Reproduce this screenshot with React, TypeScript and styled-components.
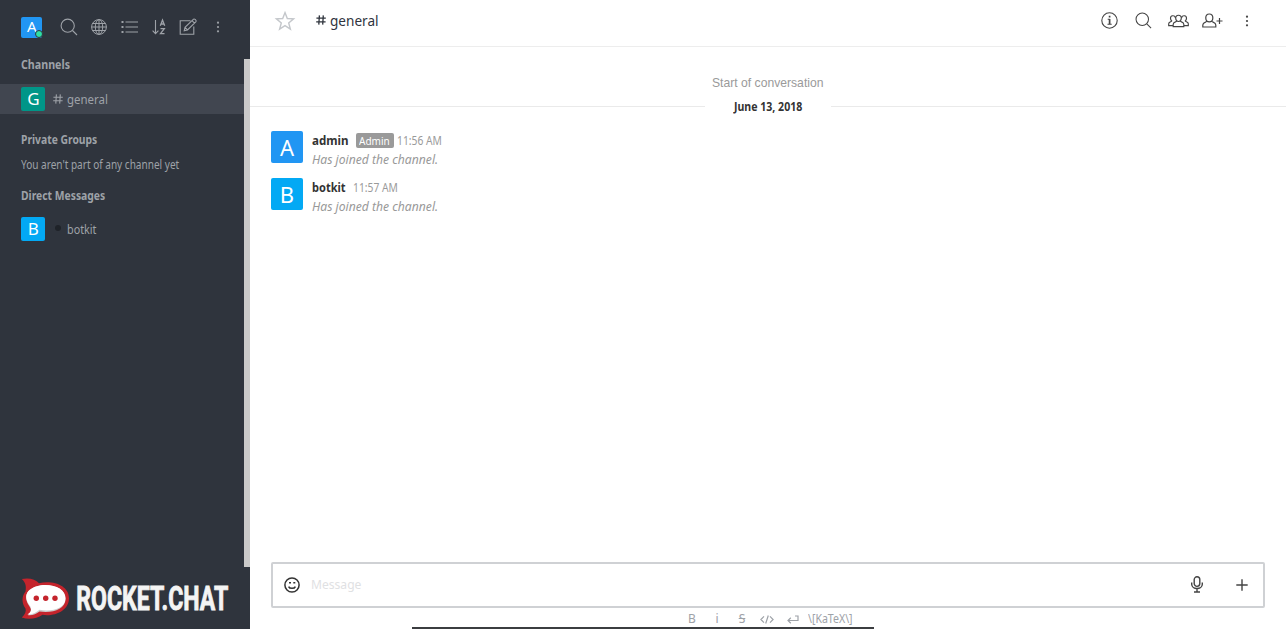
import React from 'react';
import styled, { createGlobalStyle } from 'styled-components';

const Global = createGlobalStyle`
  * { box-sizing: border-box; }
  body { margin: 0; overflow: hidden; font-family: "Noto Sans", "Open Sans", sans-serif; }
  svg { display: block; flex: none; fill: none; stroke: currentColor; overflow: visible; }
`;

const Page = styled.div`display: flex; width: 1286px; height: 629px; overflow: hidden; background: #fff;`;

const Sidebar = styled.aside`
  width: 250px; height: 629px; flex: none; display: flex; flex-direction: column;
  background: #2f343d; color: #9ea2a8;
`;
const SideTools = styled.div`height: 59px; flex: none; padding: 16.5px 0 0 21.4px; display: flex; align-items: flex-start;`;
const ToolSlot = styled.div<{ $w: number }>`width: ${p => p.$w}px; height: 21px; flex: none; display: flex; align-items: center; justify-content: center;`;
const SideScroll = styled.div`height: 508px; flex: none; display: flex;`;
const SideList = styled.div`flex: 1;`;
const ScrollThumb = styled.div`width: 6px; background: #cac9c9;`;
const Text = styled.span<{ $size: number; $w: number; $sx?: number; $color?: string; $bold?: boolean; $italic?: boolean }>`
  display: block; flex: none; width: ${p => p.$w}px; white-space: nowrap;
  font-size: ${p => p.$size}px; font-weight: ${p => (p.$bold ? 700 : 400)};
  font-style: ${p => (p.$italic ? 'italic' : 'normal')};
  transform: scaleX(${p => p.$sx ?? 1}); transform-origin: 0 50%;
  color: ${p => p.$color ?? 'inherit'};
`;
const StartText = styled(Text)`font-family: "Liberation Sans", sans-serif;`;
const SideHeading = styled.div<{ $h: number; $top?: number }>`
  height: ${p => p.$h}px; margin-top: ${p => p.$top ?? 0}px; padding-left: 21.4px; line-height: 12px;
`;
const SideRow = styled.div<{ $active?: boolean }>`
  height: 30px; display: flex; align-items: center; padding-left: 21.4px;
  background: ${p => (p.$active ? '#414650' : 'transparent')};
`;
const Avatar = styled.div<{ $size: number; $bg: string; $font: number }>`
  position: relative; flex: none; width: ${p => p.$size}px; height: ${p => p.$size}px; border-radius: 2px;
  background: ${p => p.$bg}; color: #fff; font-size: ${p => p.$font}px;
  display: flex; align-items: center; justify-content: center; line-height: 1; padding-bottom: 1px;
`;
const Online = styled.i`
  position: absolute; right: -1px; bottom: 0; width: 8px; height: 8px; border-radius: 50%;
  background: #2de0a5; border: 1px solid #2f343d;
`;
const RowMark = styled.div`width: 22px; padding-left: 8px; display: flex; align-items: center;`;
const Offline = styled.i`width: 6px; height: 6px; margin: -2px 0 0 2px; border-radius: 50%; background: #1f2329;`;
const LogoBox = styled.div`height: 62px; padding: 10px 0 0 21px;`;

const Main = styled.main`flex: 1; display: flex; flex-direction: column; min-width: 0;`;
const Header = styled.header`
  height: 47px; flex: none; display: flex; align-items: center; padding: 0 22px 5px 25px;
  border-bottom: 1px solid #ededed; color: #2f343d;
`;
const RoomTitle = styled.div`display: flex; align-items: center; gap: 4px; padding: 0 0 2px 21px;`;
const Actions = styled.div`margin-left: auto; display: flex; color: #444;`;
const Messages = styled.section`flex: 1; padding-top: 27px;`;
const Start = styled.div`display: flex; justify-content: center; height: 18px; line-height: 18px; padding-right: 1px;`;
const DateLine = styled.div`
  display: flex; align-items: center; height: 28px; line-height: 28px;
  &::before, &::after { content: ''; height: 1px; background: #eaeaea; }
  &::before { width: 455px; }
  &::after { flex: 1; }
`;
const DateText = styled.div`width: 126px; display: flex; justify-content: center; padding-top: 1px;`;
const MessageRow = styled.article`display: flex; height: 47px; padding: 11px 0 0 21px;`;
const Body = styled.div`padding-left: 9.4px;`;
const Meta = styled.div`display: flex; align-items: center; height: 19px; line-height: 19px;`;
const Badge = styled.span`
  width: 38px; height: 15px; margin-right: 3.5px; border-radius: 2px; background: #9a9a9a; color: #fff;
  display: flex; justify-content: center; line-height: 15px;
`;
const Composer = styled.footer`height: 67px; flex: none; padding: 0 21.5px 0 21px;`;
const InputBox = styled.div`
  height: 46px; border: 2px solid #cfd1d4; border-radius: 2px; display: flex; align-items: center;
  padding: 0 10.5px 1px 11px; color: #333;
`;
const Placeholder = styled.div`padding: 0 0 1px 11px;`;
const Format = styled.div`height: 15px; display: flex; align-items: center; color: #9ea2a8; padding: 7px 0 0 415px;`;
const FormatItem = styled.span<{ $w: number }>`width: ${p => p.$w}px; display: flex; justify-content: center; font-size: 12px; line-height: 14px;`;
const BottomBar = styled.div`width: 462px; height: 2px; margin: 4px 0 0 141px; background: #3b3d40;`;

const Search = ({ s = 18 }: { s?: number }) => (
  <svg width={s} height={s} viewBox="0 0 18 18" strokeWidth="1.1"><circle cx="7.7" cy="7.7" r="6.6" /><path d="M12.5 12.5 17 17" /></svg>
);
const Globe = () => (
  <svg width="16" height="16" viewBox="0 0 16 16" strokeWidth="1"><circle cx="8" cy="8" r="7.4" /><ellipse cx="8" cy="8" rx="3.7" ry="7.4" /><path d="M8 .6v14.8M.6 8h14.8M1.6 4.5h12.8M1.6 11.5h12.8" /></svg>
);
const List = () => (
  <svg width="17" height="14" viewBox="0 0 17 14" strokeWidth="1.2"><path d="M4.5 2H17M4.5 7H17M4.5 12H17" /><path strokeWidth="2" d="M.5 2h2M.5 7h2M.5 12h2" /></svg>
);
const Sort = () => (
  <svg width="14" height="16" viewBox="0 0 14 16" strokeWidth="1.1"><path d="M3.5 1v13.5M.6 11.6l2.9 3 2.9-3" /><path strokeWidth="1.3" d="M8.3 6.8 10.5 1l2.2 5.8M9 5h3M8.5 9.6h3.8l-3.8 5h4" /></svg>
);
const Edit = () => (
  <svg width="19" height="18" viewBox="0 0 19 18" strokeWidth="1.1"><path d="M11.5 2.7H1.2v13.6h13.6V8.5M5.2 12.8l.8-3.5 8.6-8.1c.9-.8 3.2 1.4 2.4 2.4l-8.5 8.3zM6 9.3l2.5 2.6M13 2.7l2.5 2.5" /></svg>
);
const DotsSvg = styled.svg`&& { fill: currentColor; stroke: none; }`;
const Dots = () => (
  <DotsSvg width="4" height="12" viewBox="0 0 4 12"><circle cx="2" cy="1.7" r="1.1" /><circle cx="2" cy="6" r="1.1" /><circle cx="2" cy="10.3" r="1.1" /></DotsSvg>
);
const Hash = ({ w = 1.1 }: { w?: number }) => (
  <svg width="10" height="10" viewBox="0 0 10 10" strokeWidth={w}><path d="M3.4.4 2.8 9.6M7.3.4 6.7 9.6M.4 3.2h9.4M.2 6.8h9.4" /></svg>
);
const Star = () => (
  <svg width="20" height="20" viewBox="0 0 20 20" color="#c4c7cb" strokeWidth="1.4"><path d="M10 1.6 12.3 7.5l6.3.4-4.9 4 1.7 6.3L10 14.7l-5.4 3.5 1.7-6.3-4.9-4 6.3-.4z" /></svg>
);
const Info = () => (
  <svg width="17" height="17" viewBox="0 0 17 17" strokeWidth="1.1"><circle cx="8.5" cy="8.5" r="7.7" /><path strokeWidth="1.7" d="M8.6 3.7v1.8M8.6 7v5" /><path d="M6.7 7.3h2M6.5 12.2h4.2" /></svg>
);
const Team = () => (
  <svg width="21" height="14" viewBox="0 0 21 14" strokeWidth="1.15">
    <path d="M10.5 1.2c4 0 3.5 6.3 0 6.3s-4-6.3 0-6.3zM8.6 7c0 1-3.4.8-3.4 3.3v2.3h10.6v-2.3C15.8 7.8 12.4 8 12.4 7M7.3 3.6C6.7.9 2.3 1.1 2.5 4.4c.1 1.3.6 2 1.2 2.5C3.3 7.8.7 7.7.7 9.7v1.9h4.4M13.7 3.6c.6-2.7 5-2.5 4.8.8-.1 1.3-.6 2-1.2 2.5.4.9 3 .8 3 2.8v1.9h-4.4" />
  </svg>
);
const AddUser = () => (
  <svg width="21" height="15" viewBox="0 0 21 15" strokeWidth="1.2"><path d="M7.3 1c5 0 4.4 7.8 0 7.8S2.3 1 7.3 1zM5 8C4.8 9.3.8 9 .8 12v2h13v-2c0-3-4-2.7-4.2-4M17.5 5v6M14.5 8h6" /></svg>
);
const Smile = () => (
  <svg width="16" height="16" viewBox="0 0 16 16" strokeWidth="1.5"><circle cx="8" cy="8" r="7.1" /><path d="M4.6 9.6c1 2.3 5.8 2.3 6.8 0M5 5.8h2M9.3 5.8h2" /></svg>
);
const Mic = () => (
  <svg width="12" height="17" viewBox="0 0 12 17" strokeWidth="1.4"><rect x="3.2" y=".8" width="5.6" height="9.6" rx="2.8" /><path d="M.7 6.5v1.8c0 5.6 10.6 5.6 10.6 0V6.500M6 12.500v3.300M3 16h6" /></svg>
);
const Plus = () => <svg width="12" height="12" viewBox="0 0 12 12" strokeWidth="1.4"><path d="M6 .3v11.4M.3 6h11.4" /></svg>;
const Code = () => <svg width="14" height="9" viewBox="0 0 14 9" strokeWidth="1.2"><path d="M4 1.3.9 4.5 4 7.7M10 1.3l3.1 3.2L10 7.7M8.3.5 5.7 8.5" /></svg>;
const Enter = () => <svg width="12" height="9" viewBox="0 0 12 9" strokeWidth="1.2"><path d="M8 1h3v4.5H1M3.8 2.8 1 5.5l2.8 2.7" /></svg>;

const LogoSvg = styled.svg`&& { stroke: none; }`;
const Logo = () => (
  <LogoSvg width="210" height="44" viewBox="0 0 210 44">
    <path fill="#c4242c" d="M.8 2C8 .3 14.500 2.300 18 6.200 32 3 48 8.500 48 21.200 48 34 33 39.800 21.500 37.800 16 41.500 8 43 .8 40.500 4 37.500 5.400 34.500 4.500 31.500.5 26 .5 19.500 4.500 14.500 5.500 9 4.500 5.500.8 2z" />
    <path fill="#ccc" d="M6.500 38c4-2 4.300-5.500 2-8.500C-1.500 14.500 14 8 24 8c12 0 20.500 5.500 20.500 14C44.500 32.500 31 36.500 18.500 34.500 15 37 11 38.800 6.500 38z" />
    <path fill="#fff" d="M6.500 37.300c4-2 4.500-5.500 2-9C-1.500 14 14 8 24 8c12 0 20.500 5 20.500 13.200 0 10.300-13.500 13.800-26 11.500C15 35.700 11 38 6.500 37.300z" />
    <g fill="#c4242c"><circle cx="15.3" cy="21.300" r="2.700" /><circle cx="24.700" cy="21.300" r="2.700" /><circle cx="34" cy="21.300" r="2.700" /></g>
    <text x="55.300" y="32.500" fontFamily="Liberation Sans Narrow, Roboto, sans-serif" fontWeight="700" fontSize="34" fill="#f4f4f4" stroke="#f4f4f4" strokeWidth=".9" textLength="152" lengthAdjust="spacingAndGlyphs">ROCKET.CHAT</text>
  </LogoSvg>
);

export default function App() {
  return (
    <Page>
      <Global />
      <Sidebar>
        <SideTools>
          <Avatar $size={21} $bg="#2196f3" $font={15}>A<Online /></Avatar>
          <ToolSlot $w={54}><Search /></ToolSlot>
          <ToolSlot $w={6}><Globe /></ToolSlot>
          <ToolSlot $w={54}><List /></ToolSlot>
          <ToolSlot $w={6}><Sort /></ToolSlot>
          <ToolSlot $w={53}><Edit /></ToolSlot>
          <ToolSlot $w={6}><Dots /></ToolSlot>
        </SideTools>
        <SideScroll>
          <SideList>
            <SideHeading $h={25}><Text $size={12} $w={60} $sx={0.89} $bold>Channels</Text></SideHeading>
            <SideRow $active>
              <Avatar $size={24} $bg="#009688" $font={17}>G</Avatar>
              <RowMark><Hash /></RowMark>
              <Text $size={13} $w={60} $sx={0.88}>general</Text>
            </SideRow>
            <SideHeading $h={25} $top={20}><Text $size={12} $w={100} $sx={0.86} $bold>Private Groups</Text></SideHeading>
            <SideHeading $h={31}><Text $size={12} $w={200} $sx={0.837}>You aren't part of any channel yet</Text></SideHeading>
            <SideHeading $h={24}><Text $size={12} $w={100} $sx={0.862} $bold>Direct Messages</Text></SideHeading>
            <SideRow>
              <Avatar $size={24} $bg="#03a9f4" $font={17}>B</Avatar>
              <RowMark><Offline /></RowMark>
              <Text $size={13} $w={60} $sx={0.83}>botkit</Text>
            </SideRow>
          </SideList>
          <ScrollThumb />
        </SideScroll>
        <LogoBox><Logo /></LogoBox>
      </Sidebar>
      <Main>
        <Header>
          <ToolSlot $w={20}><Star /></ToolSlot>
          <RoomTitle><Hash w={1.3} /><Text $size={15} $w={60} $sx={0.905}>general</Text></RoomTitle>
          <Actions>
            <ToolSlot $w={34}><Info /></ToolSlot>
            <ToolSlot $w={35}><Search s={17} /></ToolSlot>
            <ToolSlot $w={34}><Team /></ToolSlot>
            <ToolSlot $w={35}><AddUser /></ToolSlot>
            <ToolSlot $w={34}><Dots /></ToolSlot>
          </Actions>
        </Header>
        <Messages>
          <Start><StartText $size={13} $w={112} $sx={0.935} $color="#9a9a9a">Start of conversation</StartText></Start>
          <DateLine><DateText><Text $size={12} $w={69} $sx={0.88} $bold $color="#333">June 13, 2018</Text></DateText></DateLine>
          <MessageRow>
            <Avatar $size={32} $bg="#2196f3" $font={22}>A</Avatar>
            <Body>
              <Meta><Text $size={13} $w={43.6} $sx={0.89} $bold $color="#333">admin</Text><Badge><Text $size={11} $w={31} $sx={0.91}>Admin</Text></Badge><Text $size={12} $w={50} $sx={0.856} $color="#9a9a9a">11:56 AM</Text></Meta>
              <Meta><Text $size={13} $w={140} $sx={0.935} $italic $color="#999">Has joined the channel.</Text></Meta>
            </Body>
          </MessageRow>
          <MessageRow>
            <Avatar $size={32} $bg="#03a9f4" $font={22}>B</Avatar>
            <Body>
              <Meta><Text $size={13} $w={41} $sx={0.85} $bold $color="#333">botkit</Text><Text $size={12} $w={50} $sx={0.856} $color="#9a9a9a">11:57 AM</Text></Meta>
              <Meta><Text $size={13} $w={140} $sx={0.935} $italic $color="#999">Has joined the channel.</Text></Meta>
            </Body>
          </MessageRow>
        </Messages>
        <Composer>
          <InputBox>
            <Smile /><Placeholder><Text $size={13} $w={60} $sx={0.93} $color="#dfe1e3">Message</Text></Placeholder>
            <Actions><ToolSlot $w={34}><Mic /></ToolSlot><ToolSlot $w={18} /><ToolSlot $w={20}><Plus /></ToolSlot></Actions>
          </InputBox>
          <Format>
            <FormatItem $w={12}>B</FormatItem><FormatItem $w={38}>i</FormatItem><FormatItem $w={12}><s>S</s></FormatItem>
            <FormatItem $w={38}><Code /></FormatItem><FormatItem $w={14}><Enter /></FormatItem><FormatItem $w={60}><Text $size={12} $w={45} $sx={0.88}>\[KaTeX\]</Text></FormatItem>
          </Format>
          <BottomBar />
        </Composer>
      </Main>
    </Page>
  );
}
